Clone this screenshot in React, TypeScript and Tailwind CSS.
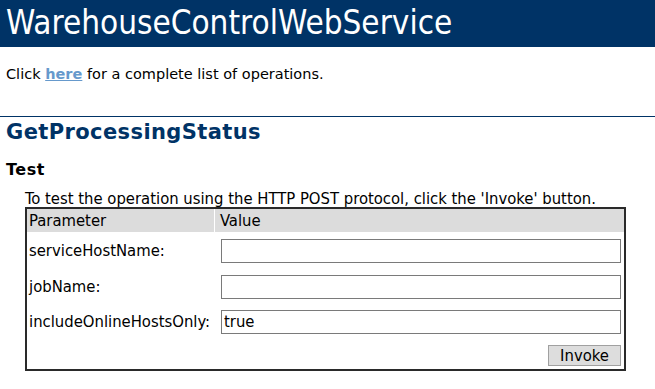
import React from "react";

const params = [
  { name: "serviceHostName:", value: "" },
  { name: "jobName:", value: "" },
  { name: "includeOnlineHostsOnly:", value: "true" },
];

export default function App() {
  return (
    <div className="h-[389px] w-[655px] overflow-hidden bg-white font-['DejaVu_Sans',sans-serif] text-black">
      <div className="h-[47px] bg-[#003366] pl-[6px] pt-[3px] font-['DejaVu_Sans_Condensed','DejaVu_Sans',sans-serif] text-[33px] leading-[40px] text-white">
        WarehouseControlWebService
      </div>

      <p className="mt-[19px] pl-[6px] text-[14.5px] leading-[17px]">
        Click{" "}
        <a href="#" className="font-bold text-[#6699cc] underline">
          here
        </a>{" "}
        for a complete list of operations.
      </p>

      <div className="mt-[33px] border-t border-[#003366] pl-[6px] pt-[2px]">
        <h2 className="text-[21px] font-bold leading-[26px] tracking-[0.4px] text-[#003366]">GetProcessingStatus</h2>
        <h3 className="mt-[15px] text-[16px] font-bold leading-[20px] tracking-[0.5px]">Test</h3>
      </div>

      <div className="ml-[25px] mt-[10px] w-[601px] font-['DejaVu_Sans_Condensed','DejaVu_Sans',sans-serif] text-[16.5px]">
        <p className="leading-[17px]">
          To test the operation using the HTTP POST protocol, click the 'Invoke' button.
        </p>
        <div className="h-[164px] border-2 border-[#2a2a2a]">
          <div className="flex h-[23px] bg-[#dcdcdc] leading-[23px]">
            <div className="w-[188px] border-r border-white pl-[2px]">Parameter</div>
            <div className="pl-[5px]">Value</div>
          </div>
          <div className="pt-[7px]">
            {params.map((p) => (
              <div key={p.name} className="flex h-[35.5px] items-start">
                <div className="w-[189px] pl-[2px] leading-[24px]">{p.name}</div>
                <input
                  readOnly
                  value={p.value}
                  className="ml-[5px] h-[24px] w-[400px] border border-[#7a7a7a] px-[2px] text-[16.5px] outline-none"
                />
              </div>
            ))}
            <div className="-mt-px flex justify-end pr-[3px]">
              <button className="h-[21px] w-[73px] border border-[#a0a0a0] bg-[#dddddd] text-[16.5px] leading-[19px]">
                Invoke
              </button>
            </div>
          </div>
        </div>
      </div>
    </div>
  );
}
